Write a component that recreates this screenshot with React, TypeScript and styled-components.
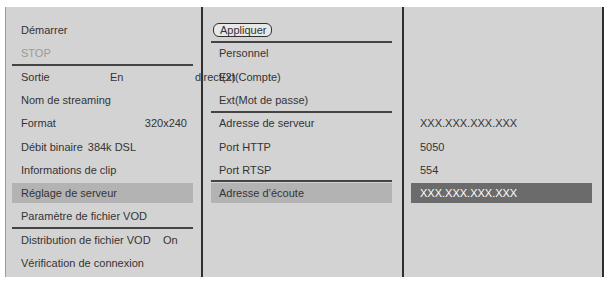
import styled, { createGlobalStyle } from 'styled-components'

const GlobalStyle = createGlobalStyle`
  html, body {
    margin: 0;
    padding: 0;
    background: #ffffff;
  }
  body {
    font-family: "Liberation Sans", Arial, sans-serif;
  }
`

const Page = styled.div`
  padding: 7px 0 0 5px;
`

const Screen = styled.div`
  display: grid;
  grid-template-columns: 197px 201px 198px;
  width: 599px;
  height: 270px;
  background: #d3d3d3;
  border-left: 1px solid #9a9a9a;
  border-right: 2px solid #2f2f2f;
  box-sizing: border-box;
  font-size: 11px;
  color: #333;
`

const Column = styled.div<{ $pl: number; $pr: number; $divider?: boolean }>`
  position: relative;
  padding: 11.4px ${(p) => p.$pr}px 0 ${(p) => p.$pl}px;
  border-right: ${(p) => (p.$divider ? '2px solid #2f2f2f' : 'none')};
  box-sizing: border-box;
  min-width: 0;
  &:first-child {
    z-index: 1;
  }
`

const Row = styled.div<{ $rule?: boolean }>`
  position: relative;
  height: 23.3px;
  display: flex;
  align-items: center;
  white-space: nowrap;

  &::after {
    content: '';
    display: ${(p) => (p.$rule ? 'block' : 'none')};
    position: absolute;
    left: 0;
    right: 0;
    bottom: -1px;
    height: 2px;
    background: #444;
  }
`

const Cell = styled.div<{ $hl?: 'light' | 'dark'; $pad?: number }>`
  flex: 1;
  height: 20px;
  display: flex;
  align-items: center;
  padding: 0 6px 0 ${(p) => p.$pad ?? 9}px;
  background: ${(p) =>
    p.$hl === 'light' ? '#b3b3b3' : p.$hl === 'dark' ? '#6b6b6b' : 'transparent'};
  color: ${(p) => (p.$hl === 'dark' ? '#ffffff' : 'inherit')};
`

const Label = styled.span<{ $w?: number; $muted?: boolean }>`
  display: inline-block;
  width: ${(p) => (p.$w ? `${p.$w}px` : 'auto')};
  flex-shrink: 0;
  color: ${(p) => (p.$muted ? '#9a9a9a' : 'inherit')};
`

const Value = styled.span<{ $right?: boolean; $gap?: number }>`
  margin-left: ${(p) => (p.$right ? 'auto' : `${p.$gap ?? 0}px`)};
`

const Button = styled.span`
  display: inline-flex;
  align-items: center;
  height: 14px;
  padding: 0 5px 0 6px;
  margin-left: 1px;
  border: 1.5px solid #2f2f2f;
  border-radius: 6px;
  background: #e8e8e8;
  box-sizing: border-box;
`

export default function App() {
  return (
    <>
      <GlobalStyle />
      <Page>
        <Screen>
          <Column $pl={6} $pr={8} $divider>
            <Row>
              <Cell>Démarrer</Cell>
            </Row>
            <Row $rule>
              <Cell>
                <Label $muted>STOP</Label>
              </Cell>
            </Row>
            <Row>
              <Cell>
                <Label $w={89}>Sortie</Label>
                <Label $w={85}>En</Label>
                <Value>direct(2)</Value>
              </Cell>
            </Row>
            <Row>
              <Cell>Nom de streaming</Cell>
            </Row>
            <Row>
              <Cell>
                <Label>Format</Label>
                <Value $right>320x240</Value>
              </Cell>
            </Row>
            <Row>
              <Cell>
                <Label>Débit binaire</Label>
                <Value $gap={5}>384k DSL</Value>
              </Cell>
            </Row>
            <Row>
              <Cell>Informations de clip</Cell>
            </Row>
            <Row>
              <Cell $hl="light">Réglage de serveur</Cell>
            </Row>
            <Row $rule>
              <Cell>Paramètre de fichier VOD</Cell>
            </Row>
            <Row>
              <Cell>
                <Label $w={142}>Distribution de fichier VOD</Label>
                <Value>On</Value>
              </Cell>
            </Row>
            <Row>
              <Cell>Vérification de connexion</Cell>
            </Row>
          </Column>

          <Column $pl={8} $pr={10} $divider>
            <Row $rule>
              <Cell $pad={1}>
                <Button>Appliquer</Button>
              </Cell>
            </Row>
            <Row>
              <Cell $pad={8}>Personnel</Cell>
            </Row>
            <Row>
              <Cell $pad={8}>Ext(Compte)</Cell>
            </Row>
            <Row $rule>
              <Cell $pad={8}>Ext(Mot de passe)</Cell>
            </Row>
            <Row>
              <Cell $pad={8}>Adresse de serveur</Cell>
            </Row>
            <Row>
              <Cell $pad={8}>Port HTTP</Cell>
            </Row>
            <Row $rule>
              <Cell $pad={8}>Port RTSP</Cell>
            </Row>
            <Row>
              <Cell $pad={8} $hl="light">
                Adresse d’écoute
              </Cell>
            </Row>
          </Column>

          <Column $pl={7} $pr={10}>
            <Row />
            <Row />
            <Row />
            <Row />
            <Row>
              <Cell>XXX.XXX.XXX.XXX</Cell>
            </Row>
            <Row>
              <Cell>5050</Cell>
            </Row>
            <Row>
              <Cell>554</Cell>
            </Row>
            <Row>
              <Cell $hl="dark">XXX.XXX.XXX.XXX</Cell>
            </Row>
          </Column>
        </Screen>
      </Page>
    </>
  )
}
